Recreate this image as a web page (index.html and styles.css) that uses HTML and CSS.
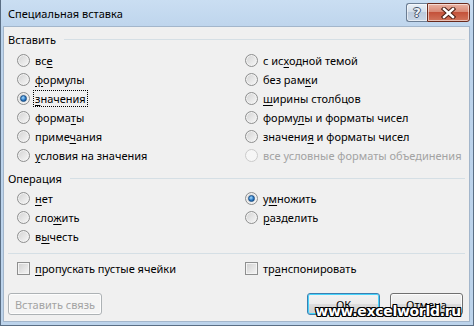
FILE: index.html
```html
<!DOCTYPE html>
<html lang="ru">
<head>
    <meta charset="UTF-8">
    <title>Специальная вставка</title>
    <link rel="stylesheet" href="styles.css">
</head>
<body>
    <div class="window">
        <div class="titlebar">
            <span class="title">Специальная вставка</span>
            <div class="caption-buttons">
                <span class="cap-btn help">?</span>
                <span class="cap-btn close">
                    <svg width="15" height="12" viewBox="0 0 15 12">
                        <path d="M3 2 L12 10 M12 2 L3 10" stroke="#4a1d12" stroke-width="4.4" stroke-linecap="square"/>
                        <path d="M3 2 L12 10 M12 2 L3 10" stroke="#fff" stroke-width="2.4" stroke-linecap="square"/>
                    </svg>
                </span>
            </div>
        </div>
        <div class="client">
            <div class="group-head"><span>Вставить</span><i class="rule"></i></div>
            <div class="options paste">
                <label class="opt"><span class="radio"></span><span>вс<u>е</u></span></label>
                <label class="opt"><span class="radio"></span><span>с ис<u>х</u>одной темой</span></label>
                <label class="opt"><span class="radio"></span><span><u>ф</u>ормулы</span></label>
                <label class="opt"><span class="radio"></span><span>без рам<u>к</u>и</span></label>
                <label class="opt"><span class="radio checked"></span><span class="focus"><u>з</u>начения</span></label>
                <label class="opt"><span class="radio"></span><span><u>ш</u>ирины столбцов</span></label>
                <label class="opt"><span class="radio"></span><span>форма<u>т</u>ы</span></label>
                <label class="opt"><span class="radio"></span><span>форму<u>л</u>ы и форматы чисел</span></label>
                <label class="opt"><span class="radio"></span><span>приме<u>ч</u>ания</span></label>
                <label class="opt"><span class="radio"></span><span>значени<u>я</u> и форматы чисел</span></label>
                <label class="opt"><span class="radio"></span><span><u>у</u>словия на значения</span></label>
                <label class="opt disabled"><span class="radio"></span><span>все условные форматы объединения</span></label>
            </div>
            <div class="group-head op-head"><span>Операция</span><i class="rule"></i></div>
            <div class="options ops">
                <label class="opt"><span class="radio"></span><span><u>н</u>ет</span></label>
                <label class="opt"><span class="radio checked"></span><span>у<u>м</u>ножить</span></label>
                <label class="opt"><span class="radio"></span><span>сло<u>ж</u>ить</span></label>
                <label class="opt"><span class="radio"></span><span><u>р</u>азделить</span></label>
                <label class="opt"><span class="radio"></span><span>в<u>ы</u>честь</span></label>
            </div>
            <div class="separator"></div>
            <div class="options checks">
                <label class="opt"><span class="checkbox"></span><span><u>п</u>ропускать пустые ячейки</span></label>
                <label class="opt"><span class="checkbox"></span><span>тр<u>а</u>нспонировать</span></label>
            </div>
            <div class="buttons">
                <span class="btn disabled">Вставить связь</span>
                <span class="spacer"></span>
                <span class="btn default">ОК</span>
                <span class="btn">Отмена</span>
            </div>
        </div>
        <div class="watermark">www.excelworld.ru</div>
    </div>
</body>
</html>
```

FILE: styles.css
```css
body { margin: 0; background: #fff; font-family: "Noto Sans", sans-serif; font-size: 11px; color: #000; }
.window { position: relative; width: 474px; height: 326px; box-sizing: border-box; border: 1px solid #5a6e84; border-top: none; background: linear-gradient(#cadef2, #bdd4ec 30px, #bcd3eb); padding: 0 3px 3px 2px; display: flex; flex-direction: column; }
.titlebar { height: 26px; display: flex; align-items: flex-start; }
.title { padding: 6px 0 0 5px; font-size: 11px; line-height: 15px; }
.caption-buttons { margin-left: auto; margin-top: 3px; display: flex; }
.cap-btn { height: 17px; border: 1px solid #6b7d93; border-radius: 3px; display: flex; align-items: center; justify-content: center; box-shadow: inset 0 0 0 1px rgba(255,255,255,0.55); }
.help { width: 20px; border-right: none; border-radius: 3px 0 0 3px; background: linear-gradient(#e9f0f8, #d3deea 45%, #bccbdd 50%, #c9d7e7); color: #eef2f7; font-family: "DejaVu Sans", sans-serif; font-weight: bold; font-size: 13px; text-shadow: 1px 0 #44546a, -1px 0 #44546a, 0 1px #44546a, 0 -1px #44546a; }
.close { width: 41px; border-color: #6a2a1c; border-radius: 0 3px 3px 0; background: linear-gradient(#eab2a3, #d98a76 45%, #c4523a 50%, #d2755c); }
.client { flex: 1; background: #f0f0f0; border: 1px solid #a3b6cb; display: flex; flex-direction: column; }
.group-head { height: 18px; margin-top: 3px; padding: 0 4px 0 4px; display: flex; align-items: center; }
.group-head .rule { flex: 1; height: 1px; background: #d5dfe5; margin-left: 8px; }
.op-head { margin-top: 4px; }
.op-head .rule { margin-left: 8px; }
.options { display: grid; grid-template-columns: 228px auto; grid-auto-rows: 19px; padding-left: 13px; }
.paste { margin-top: 3px; }
.ops { margin-top: 2px; }
.opt { display: flex; align-items: center; white-space: nowrap; }
.opt u { text-decoration: underline; text-underline-offset: 2px; }
.radio { width: 11px; height: 11px; flex: none; border: 1px solid #8e8f8f; border-radius: 50%; margin-right: 5px; background: linear-gradient(135deg, #d2d2d2, #f8f8f8); box-shadow: inset 0 0 0 1px #f2f2f2; display: flex; align-items: center; justify-content: center; }
.radio.checked::after { content: ""; width: 5px; height: 5px; border-radius: 50%; background: radial-gradient(circle at 40% 35%, #a6dcff, #2a78c4 55%, #0d3f78); border: 1px solid #1a4f86; }
.disabled { color: #a3a3a3; }
.disabled .radio { border-color: #cbcbcb; background: #f6f6f6; box-shadow: none; }
.focus { outline: 1px dotted #000; outline-offset: 0; padding: 0 1px; margin-left: -1px; line-height: 15px; }
.separator { height: 1px; background: #d5dfe5; margin: 7px 4px 0 4px; }
.checks { margin-top: 5px; }
.checkbox { width: 11px; height: 11px; flex: none; border: 1px solid #8e8f8f; margin-right: 5px; background: linear-gradient(135deg, #cfcfcf, #f6f6f6); box-shadow: inset 0 0 0 1px #f4f4f4; }
.buttons { display: flex; gap: 10px; margin-top: 15px; padding: 0 6px 0 4px; }
.spacer { flex: 1; }
.btn { width: 71px; height: 20px; border: 1px solid #707070; border-radius: 3px; background: linear-gradient(#f2f2f2, #ebebeb 50%, #dddddd 50%, #cfcfcf); box-shadow: inset 0 0 0 1px rgba(255,255,255,0.8); display: flex; align-items: center; justify-content: center; }
.btn.disabled { width: 92px; border-color: #adb2b5; background: #f4f4f4; color: #a3a3a3; }
.btn.default { border-color: #3c7fb1; box-shadow: inset 0 0 0 1px #48d3fb; }
.watermark { position: absolute; right: 12px; bottom: 6px; font-family: "DejaVu Sans", sans-serif; font-weight: bold; font-size: 14px; color: #fff; letter-spacing: -0.3px; text-shadow: 1px 0 #000, -1px 0 #000, 0 1px #000, 0 -1px #000, 1px 1px #000, -1px -1px #000, 1px -1px #000, -1px 1px #000; }
```
